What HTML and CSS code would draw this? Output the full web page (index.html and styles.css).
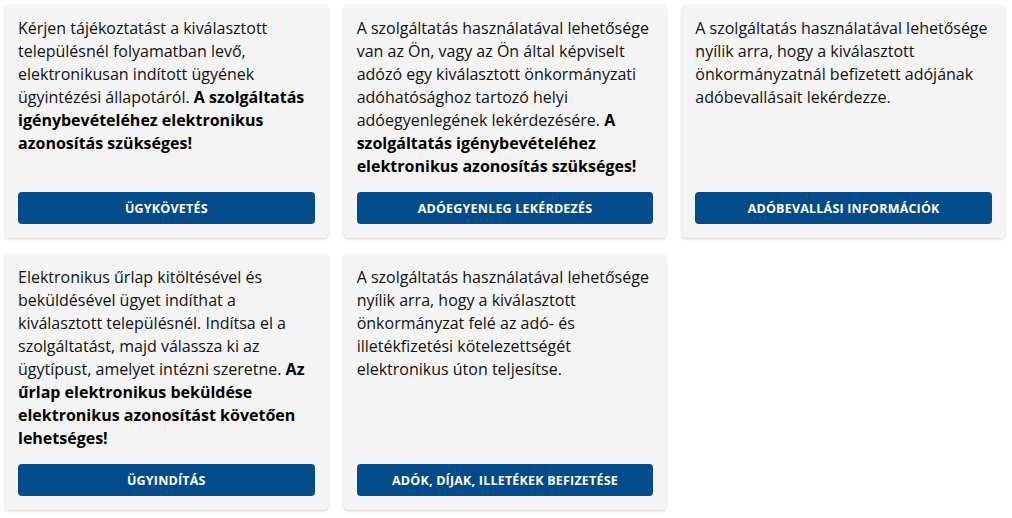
FILE: index.html
```html
<!DOCTYPE html>
<html lang="hu">
<head>
<meta charset="utf-8">
<link rel="stylesheet" href="styles.css">
</head>
<body>
<div class="grid">
  <div class="card">
    <p class="text">Kérjen tájékoztatást a kiválasztott településnél folyamatban levő, elektronikusan indított ügyének ügyintézési állapotáról. <b>A szolgáltatás igénybevételéhez elektronikus azonosítás szükséges!</b></p>
    <a class="btn">Ügykövetés</a>
  </div>
  <div class="card">
    <p class="text">A szolgáltatás használatával lehetősége van az Ön, vagy az Ön által képviselt adózó egy kiválasztott önkormányzati adóhatósághoz tartozó helyi adóegyenlegének lekérdezésére. <b>A szolgáltatás igénybevételéhez elektronikus azonosítás szükséges!</b></p>
    <a class="btn">Adóegyenleg lekérdezés</a>
  </div>
  <div class="card">
    <p class="text">A szolgáltatás használatával lehetősége nyílik arra, hogy a kiválasztott önkormányzatnál befizetett adójának adóbevallásait lekérdezze.</p>
    <a class="btn">Adóbevallási információk</a>
  </div>
  <div class="card">
    <p class="text">Elektronikus űrlap kitöltésével és beküldésével ügyet indíthat a kiválasztott településnél. Indítsa el a szolgáltatást, majd válassza ki az ügytípust, amelyet intézni szeretne. <b>Az űrlap elektronikus beküldése elektronikus azonosítást követően lehetséges!</b></p>
    <a class="btn">Ügyindítás</a>
  </div>
  <div class="card">
    <p class="text">A szolgáltatás használatával lehetősége nyílik arra, hogy a kiválasztott önkormányzat felé az adó- és illetékfizetési kötelezettségét elektronikus úton teljesítse.</p>
    <a class="btn">Adók, díjak, illetékek befizetése</a>
  </div>
</div>
</body>
</html>
```

FILE: styles.css
```css
* { box-sizing: border-box; }
html, body {
  margin: 0;
  background: #ffffff;
  font-family: "Open Sans", "Noto Sans", sans-serif;
}
.grid {
  display: grid;
  width: 1010px;
  grid-template-columns: repeat(3, 1fr);
  column-gap: 16px;
  row-gap: 16px;
  padding: 5px;
}
.card {
  display: flex;
  flex-direction: column;
  background: #f4f4f4;
  border-radius: 4px;
  box-shadow: 0 1px 3px rgba(0, 0, 0, 0.18);
  padding: 12px 13px 14px 13px;
}
.text {
  flex: 1;
  margin: 0 0 14px 0;
  font-size: 16px;
  line-height: 23px;
  color: #111111;
}
.text b {
  font-weight: 700;
  color: #000000;
}
.btn {
  display: flex;
  align-items: center;
  justify-content: center;
  height: 32px;
  background: #034b89;
  color: #ffffff;
  border-radius: 4px;
  font-size: 12.5px;
  font-weight: 700;
  text-transform: uppercase;
  letter-spacing: 0.2px;
}
```
